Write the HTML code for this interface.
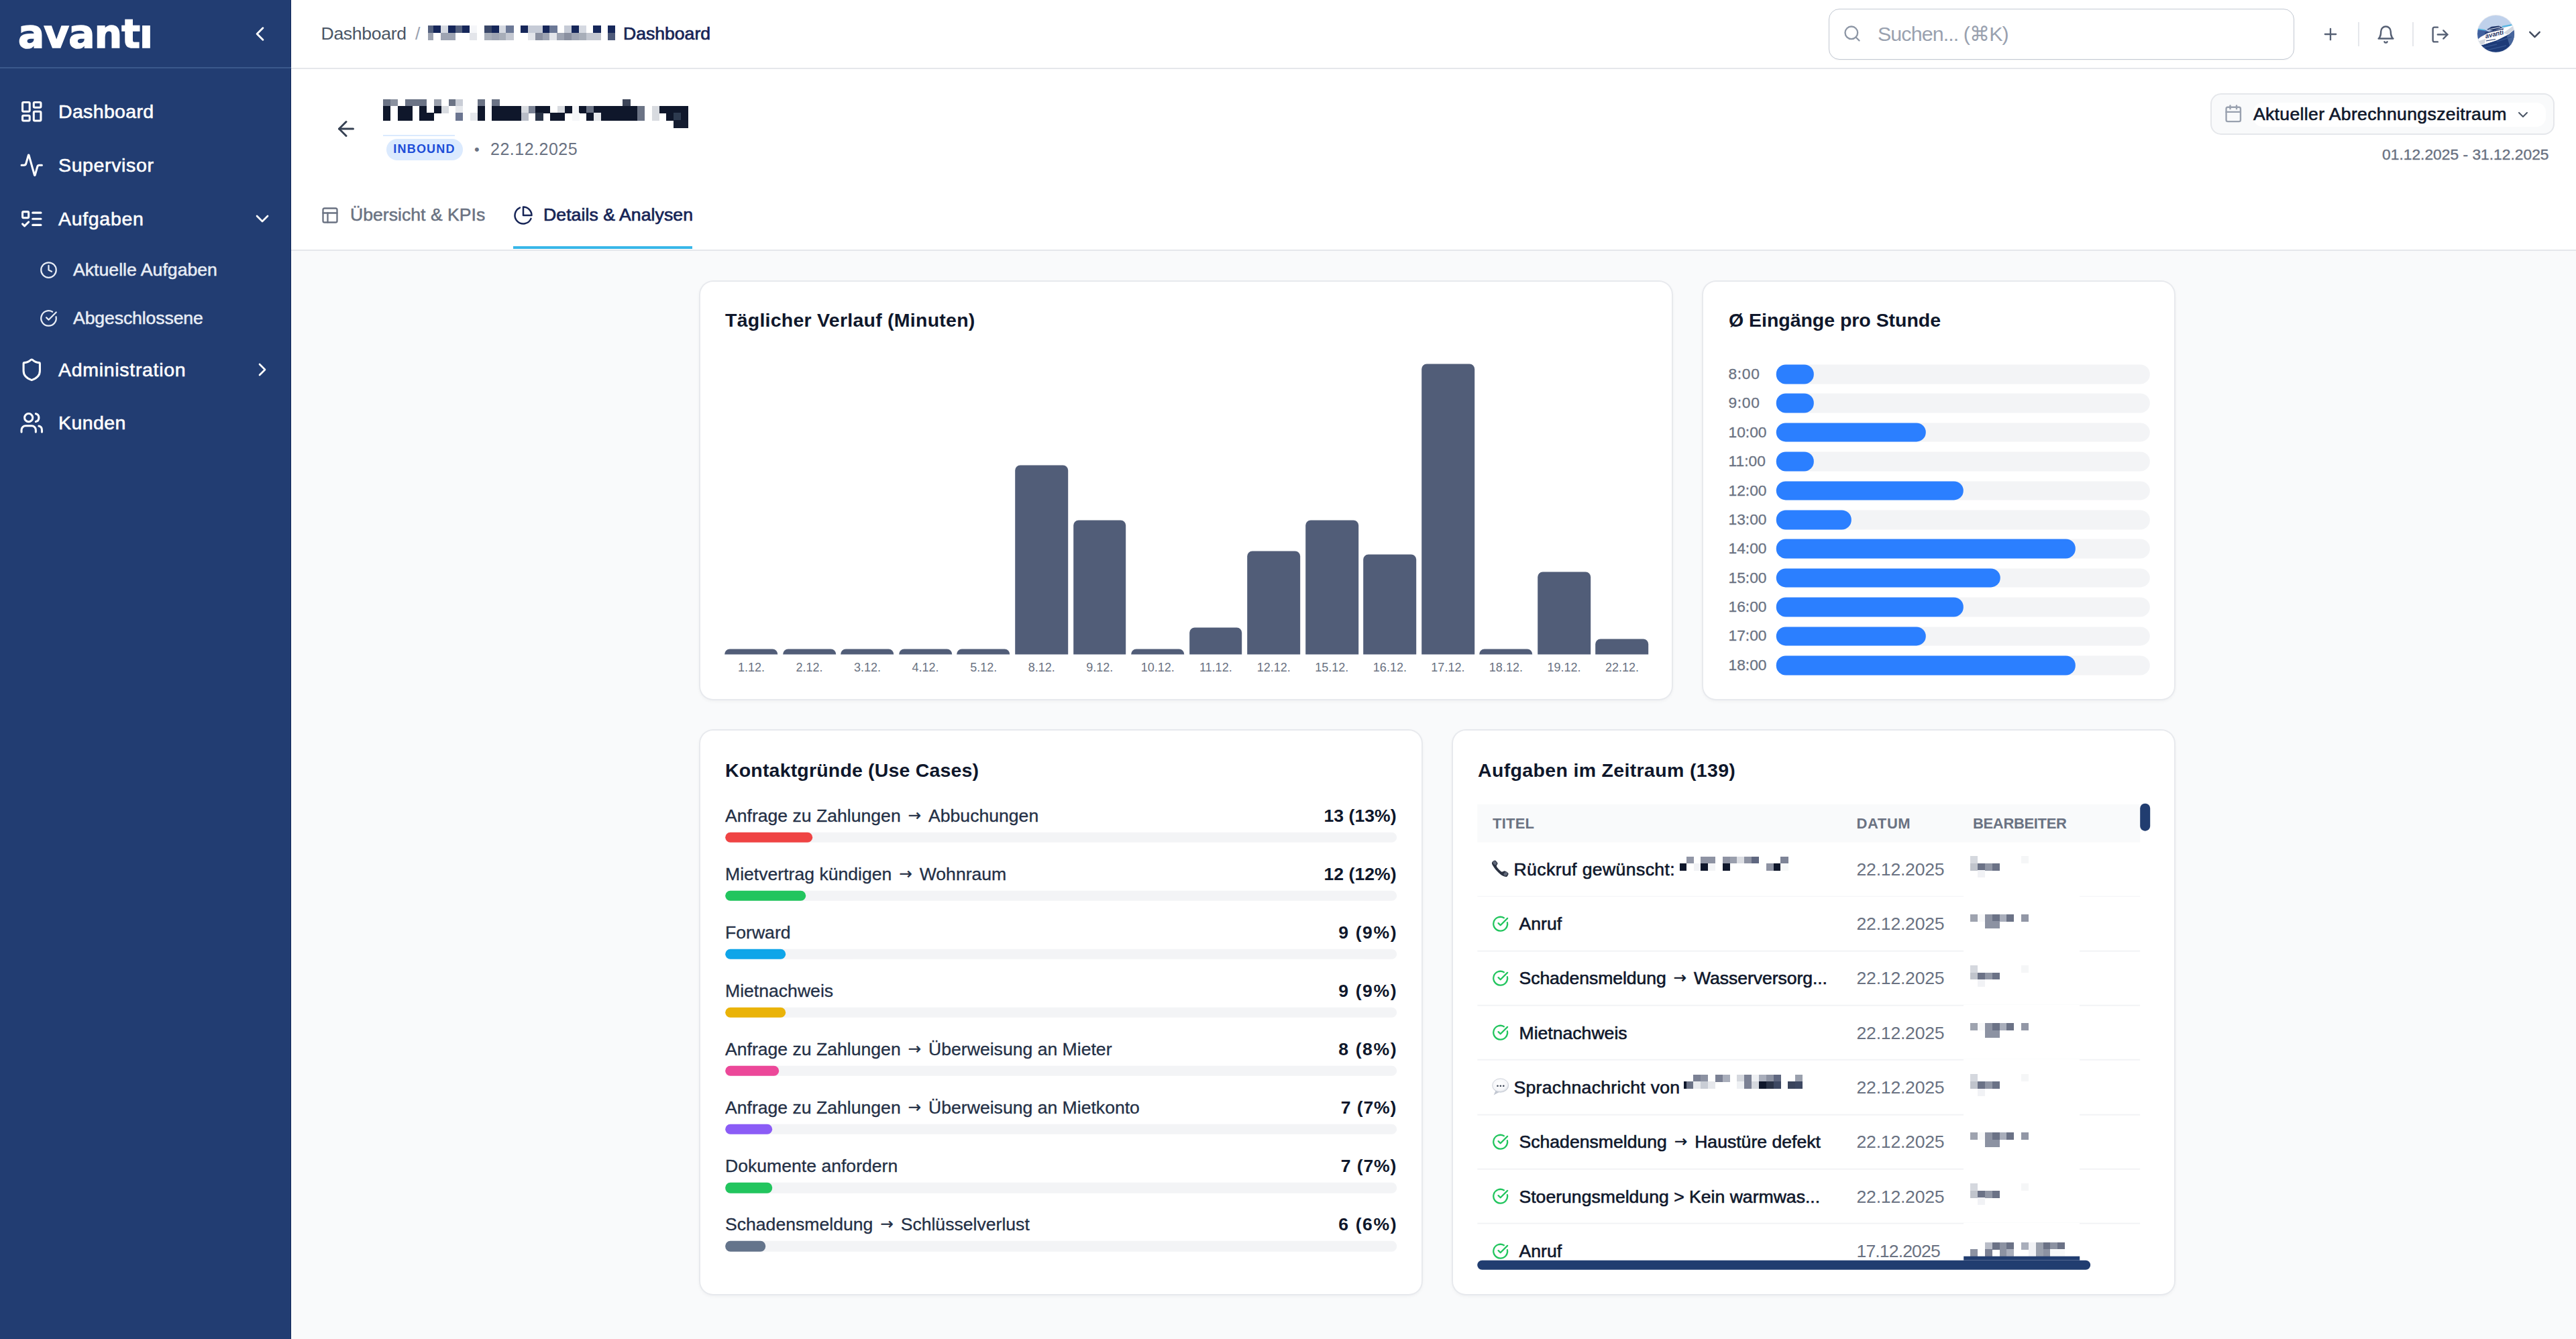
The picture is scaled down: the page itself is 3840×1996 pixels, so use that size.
<!DOCTYPE html>
<html lang="de">
<head>
<meta charset="utf-8">
<title>avanti – Dashboard</title>
<style>
*{box-sizing:border-box;margin:0;padding:0}
html,body{width:3840px;height:1996px;overflow:hidden;background:#f9fafb}
body{font-family:"Liberation Sans",sans-serif;color:#0f172b;position:relative;-webkit-font-smoothing:antialiased}
.abs{position:absolute}
.t{position:absolute;white-space:nowrap;display:flex;align-items:center;line-height:1}
svg.ic{position:absolute;fill:none;stroke:currentColor;stroke-width:2;stroke-linecap:round;stroke-linejoin:round;overflow:visible}

/* ---------- sidebar ---------- */
#sb{position:absolute;left:0;top:0;width:434px;height:1996px;background:#223d72;color:#fff;border-right:1.5px solid #132a5c;z-index:3}
#sb .logo{position:absolute;left:27px;top:12.5px;height:76px;font-family:"DejaVu Sans","Liberation Sans",sans-serif;font-weight:700;font-size:58px;letter-spacing:-.8px;color:#fff;-webkit-text-stroke:1.6px #fff}
#sb .div{position:absolute;left:0;top:100px;width:434px;height:2px;background:#3a588b}
#sb .it{font-size:28.5px;height:40px;left:87px;color:#fff;-webkit-text-stroke:.6px #fff}
#sb .sub{font-size:26.6px;height:40px;left:109px;color:#e8edf5;-webkit-text-stroke:.5px #e8edf5}

/* ---------- top bar ---------- */
#tb{position:absolute;left:434px;top:0;width:3406px;height:103px;background:#fff;border-bottom:2px solid #e5e7eb;z-index:2}
#ph{position:absolute;left:434px;top:102px;width:3406px;height:272px;background:#fff;border-bottom:2px solid #e5e7eb}


/* top bar content */
#tb .bc{font-size:26.6px;height:40px;top:30.3px;color:#4a5565}
#tb .bc.cur{color:#162456;font-weight:400;-webkit-text-stroke:.7px #162456}
#search{position:absolute;left:2292px;top:13px;width:694px;height:75.5px;border:1.6px solid #c3c9d3;border-radius:16px;background:#fff;box-shadow:0 1px 2px rgba(0,0,0,.04)}
#search .ph{left:72px;top:16px;height:40px;font-size:30.4px;color:#99a1af}
.vdiv{position:absolute;width:2px;height:36px;top:32.5px;background:#e5e7eb}
/* page head */
#ph .badge{position:absolute;left:141.5px;top:104.5px;width:114px;height:32px;border-radius:16px;background:#dbeafe;color:#1d4ed8;font-size:18px;font-weight:700;letter-spacing:1.6px;display:flex;align-items:center;justify-content:center}
#ph .date{left:297px;top:100.5px;height:40px;font-size:25px;color:#6a7282}
#ph .dot{left:273px;top:101px;height:40px;font-size:22px;color:#6a7282}
#ph .tab{font-size:26.6px;height:40px;top:198.5px}
#per{position:absolute;left:2861.4px;top:37.4px;width:512.2px;height:61.2px;border:2px solid #e5e7eb;border-radius:16px;background:#f9fafb}
#per .in{position:absolute;left:62px;top:11.5px;width:436px;height:36px;border-radius:14px;background:#fff}
#per .tx{left:61.5px;top:9px;height:40px;font-size:26.6px;color:#0f172b;-webkit-text-stroke:.6px #0f172b}
#ph .range{right:40.5px;top:108px;height:40px;font-size:22.8px;color:#6a7282;-webkit-text-stroke:.4px #6a7282}

/* ---------- cards ---------- */
.card{position:absolute;background:#fff;border-radius:19px;box-shadow:0 0 0 1.9px #e7e9ed,0 2px 6px rgba(15,23,43,.07)}
#c1>*,#c3>*,#c4>*{transform:translate(-.8px,-.3px)}#c2>*{transform:translate(-.2px,-.6px)}#c1>*{transform:translate(-.8px,-.6px)}
.ct{font-size:28.5px;font-weight:700;color:#0f172b;height:40px}

.bar{position:absolute;background:#515d78;border-radius:7.6px 7.6px 0 0}
.bl{position:absolute;font-size:18px;color:#6a7282;height:24px;width:120px;display:flex;align-items:center;justify-content:center;line-height:1;white-space:nowrap}
.hl{font-size:22.8px;color:#6a7282;height:30px;-webkit-text-stroke:.3px #6a7282}
.trk{position:absolute;left:109px;width:557px;height:28.5px;border-radius:14.25px;background:#f3f4f6}
.fil{position:absolute;left:109px;height:28.5px;border-radius:14.25px;background:#2b7fff}
.ul{font-size:26.6px;color:#243046;height:38px;left:38px;-webkit-text-stroke:.3px #243046}
.uv{font-size:26.6px;color:#0f172b;font-weight:700;height:38px;right:36.5px}
.ut{position:absolute;left:38px;width:1001px;height:15.2px;border-radius:7.6px;background:#f3f4f6}
.uf{position:absolute;left:38px;height:15.2px;border-radius:7.6px}
.th{font-size:22px;font-weight:700;color:#6a7282;letter-spacing:.6px;height:30px}
.tt{font-size:26.6px;color:#0f172b;height:38px;-webkit-text-stroke:.6px #0f172b}
.td{font-size:26.6px;color:#6a7282;height:38px;left:602.5px}
.sep{position:absolute;left:37px;width:988.5px;height:1.9px;background:#f2f3f5}
.ar{font-family:"DejaVu Sans","Liberation Sans",sans-serif;font-size:.86em;-webkit-text-stroke:.5px currentColor;position:relative;top:-1px;margin:0 .485em}
</style>
</head>
<body>

<!-- ================= SIDEBAR ================= -->
<div id="sb">
  <div class="t logo">avanti</div>
  <div class="abs" style="left:160px;top:14px;width:40px;height:14.3px;background:#223d72"></div><div class="abs" style="left:198px;top:14px;width:40px;height:22.5px;background:#223d72"></div>
  <svg class="ic" style="left:370px;top:32.5px;width:35px;height:35px" viewBox="0 0 24 24"><path d="m15 18-6-6 6-6"/></svg>
  <div class="div"></div>

  <svg class="ic" style="left:29px;top:148px;width:36.5px;height:36.5px" viewBox="0 0 24 24"><rect width="7" height="9" x="3" y="3" rx="1"/><rect width="7" height="5" x="14" y="3" rx="1"/><rect width="7" height="9" x="14" y="12" rx="1"/><rect width="7" height="5" x="3" y="16" rx="1"/></svg>
  <div class="t it" style="top:146px;letter-spacing:0.34px">Dashboard</div>

  <svg class="ic" style="left:29px;top:228px;width:36.5px;height:36.5px" viewBox="0 0 24 24"><path d="M22 12h-2.48a2 2 0 0 0-1.93 1.46l-2.35 8.36a.25.25 0 0 1-.48 0L9.24 2.18a.25.25 0 0 0-.48 0l-2.35 8.36A2 2 0 0 1 4.49 12H2"/></svg>
  <div class="t it" style="top:226px;letter-spacing:0.63px">Supervisor</div>

  <svg class="ic" style="left:29px;top:308px;width:36.5px;height:36.5px" viewBox="0 0 24 24"><rect x="3" y="5" width="6" height="6" rx="1"/><path d="m3 17 2 2 4-4"/><path d="M13 6h8"/><path d="M13 12h8"/><path d="M13 18h8"/></svg>
  <div class="t it" style="top:306px;letter-spacing:0.68px">Aufgaben</div>
  <svg class="ic" style="left:375px;top:310px;width:32px;height:32px" viewBox="0 0 24 24"><path d="m6 9 6 6 6-6"/></svg>

  <svg class="ic" style="left:59px;top:388.5px;width:27px;height:27px;color:#e8edf5" viewBox="0 0 24 24"><circle cx="12" cy="12" r="10"/><polyline points="12 6 12 12 16 14"/></svg>
  <div class="t sub" style="top:382px;letter-spacing:0.03px">Aktuelle Aufgaben</div>

  <svg class="ic" style="left:59px;top:461px;width:27px;height:27px;color:#e8edf5" viewBox="0 0 24 24"><path d="M21.801 10A10 10 0 1 1 17 3.335"/><path d="m9 11 3 3L22 4"/></svg>
  <div class="t sub" style="top:454.5px;letter-spacing:-0.10px">Abgeschlossene</div>

  <svg class="ic" style="left:29px;top:532.5px;width:36.5px;height:36.5px" viewBox="0 0 24 24"><path d="M20 13c0 5-3.5 7.5-7.66 8.95a1 1 0 0 1-.67-.01C7.5 20.5 4 18 4 13V6a1 1 0 0 1 1-1c2 0 4.5-1.2 6.24-2.72a1.17 1.17 0 0 1 1.52 0C14.51 3.81 17 5 19 5a1 1 0 0 1 1 1z"/></svg>
  <div class="t it" style="top:531px;letter-spacing:0.70px">Administration</div>
  <svg class="ic" style="left:375px;top:535px;width:32px;height:32px" viewBox="0 0 24 24"><path d="m9 18 6-6-6-6"/></svg>

  <svg class="ic" style="left:29px;top:612px;width:36.5px;height:36.5px" viewBox="0 0 24 24"><path d="M16 21v-2a4 4 0 0 0-4-4H6a4 4 0 0 0-4 4v2"/><circle cx="9" cy="7" r="4"/><path d="M22 21v-2a4 4 0 0 0-3-3.87"/><path d="M16 3.13a4 4 0 0 1 0 7.75"/></svg>
  <div class="t it" style="top:610px;letter-spacing:0.40px">Kunden</div>
</div>

<!-- ================= TOP BAR ================= -->
<div id="tb">
  <div class="t bc" style="left:44.5px;letter-spacing:-0.33px">Dashboard</div>
  <div class="t bc" style="left:185px;color:#99a1af">/</div>
  <svg class="abs" style="left:203.9px;top:37.9px" width="282" height="23" viewBox="0 0 282 23" shape-rendering="crispEdges"><rect x="0.0" y="0.0" width="8.4" height="11.0" fill="#54617f"/><rect x="8.1" y="0.0" width="11.1" height="11.0" fill="#16275a"/><rect x="18.9" y="0.0" width="11.1" height="11.0" fill="#d5d9e1"/><rect x="29.8" y="0.0" width="11.1" height="11.0" fill="#16275a"/><rect x="40.6" y="0.0" width="11.1" height="11.0" fill="#54617f"/><rect x="51.4" y="0.0" width="11.1" height="11.0" fill="#16275a"/><rect x="62.2" y="0.0" width="11.1" height="11.0" fill="#f5f6f9"/><rect x="83.9" y="0.0" width="11.1" height="11.0" fill="#3a4768"/><rect x="94.7" y="0.0" width="11.1" height="11.0" fill="#16275a"/><rect x="105.6" y="0.0" width="11.1" height="11.0" fill="#d5d9e1"/><rect x="116.4" y="0.0" width="11.1" height="11.0" fill="#6b7896"/><rect x="138.1" y="0.0" width="11.1" height="11.0" fill="#16275a"/><rect x="148.9" y="0.0" width="11.1" height="11.0" fill="#c6cbd6"/><rect x="159.7" y="0.0" width="11.1" height="11.0" fill="#c6cbd6"/><rect x="170.5" y="0.0" width="11.1" height="11.0" fill="#16275a"/><rect x="181.4" y="0.0" width="11.1" height="11.0" fill="#6b7896"/><rect x="203.0" y="0.0" width="11.1" height="11.0" fill="#c6cbd6"/><rect x="213.9" y="0.0" width="11.1" height="11.0" fill="#16275a"/><rect x="224.7" y="0.0" width="11.1" height="11.0" fill="#d5d9e1"/><rect x="246.4" y="0.0" width="11.1" height="11.0" fill="#16275a"/><rect x="268.0" y="0.0" width="11.1" height="11.0" fill="#16275a"/><rect x="0.0" y="10.7" width="8.4" height="11.2" fill="#9ea4b2"/><rect x="18.9" y="10.7" width="11.1" height="11.2" fill="#9ea4b2"/><rect x="29.8" y="10.7" width="11.1" height="11.2" fill="#9ea4b2"/><rect x="62.2" y="10.7" width="11.1" height="11.2" fill="#e3e5ea"/><rect x="83.9" y="10.7" width="11.1" height="11.2" fill="#a8aeb9"/><rect x="94.7" y="10.7" width="11.1" height="11.2" fill="#9ea4b2"/><rect x="105.6" y="10.7" width="11.1" height="11.2" fill="#a8aeb9"/><rect x="116.4" y="10.7" width="11.1" height="11.2" fill="#c4c8d1"/><rect x="148.9" y="10.7" width="11.1" height="11.2" fill="#e3e5ea"/><rect x="159.7" y="10.7" width="11.1" height="11.2" fill="#8a90a0"/><rect x="170.5" y="10.7" width="11.1" height="11.2" fill="#9ea4b2"/><rect x="181.4" y="10.7" width="11.1" height="11.2" fill="#e3e5ea"/><rect x="192.2" y="10.7" width="11.1" height="11.2" fill="#9ea4b2"/><rect x="203.0" y="10.7" width="11.1" height="11.2" fill="#8a90a0"/><rect x="213.9" y="10.7" width="11.1" height="11.2" fill="#9ea4b2"/><rect x="224.7" y="10.7" width="11.1" height="11.2" fill="#a8aeb9"/><rect x="235.5" y="10.7" width="11.1" height="11.2" fill="#c4c8d1"/><rect x="246.4" y="10.7" width="11.1" height="11.2" fill="#c4c8d1"/><rect x="268.0" y="10.7" width="11.1" height="11.2" fill="#4d5a7a"/></svg>
  <div class="t bc cur" style="left:495px;letter-spacing:-0.01px">Dashboard</div>

  <div id="search">
    <svg class="ic" style="left:19.5px;top:22px;width:28px;height:28px;color:#8d96a5" viewBox="0 0 24 24"><circle cx="11" cy="11" r="8"/><path d="m21 21-4.3-4.3"/></svg>
    <div class="t ph" style="letter-spacing:-.9px">Suchen... (⌘K)</div>
  </div>
  <svg class="ic" style="left:3026.3px;top:37px;width:28px;height:28px;color:#566074" viewBox="0 0 24 24"><path d="M5 12h14"/><path d="M12 5v14"/></svg>
  <div class="vdiv" style="left:3080.5px"></div>
  <svg class="ic" style="left:3107.5px;top:36.5px;width:29px;height:29px;color:#566074" viewBox="0 0 24 24"><path d="M6 8a6 6 0 0 1 12 0c0 7 3 9 3 9H3s3-2 3-9"/><path d="M10.3 21a1.94 1.94 0 0 0 3.4 0"/></svg>
  <div class="vdiv" style="left:3161.5px"></div>
  <svg class="ic" style="left:3188.5px;top:36.500px;width:29px;height:29px;color:#566074" viewBox="0 0 24 24"><path d="M9 21H5a2 2 0 0 1-2-2V5a2 2 0 0 1 2-2h4"/><polyline points="16 17 21 12 16 7"/><line x1="21" x2="9" y1="12" y2="12"/></svg>
  <svg class="abs" style="left:3257.5px;top:21.7px" width="57" height="57" viewBox="0 0 57 57">
    <defs><clipPath id="avc"><circle cx="28.500" cy="28.400" r="27.400"/></clipPath></defs>
    <circle cx="28.500" cy="28.400" r="28.300" fill="#e6e9ef"/>
    <g clip-path="url(#avc)">
      <rect width="57" height="57" fill="#bfd1eb"/>
      <path d="M0 21.500L13 23L22 27L8 35L0 37Z" fill="#40609e"/>
      <path d="M0 20L13 22.200L13 23.800L0 22Z M38 16.800L57 13L57 15.500L38 19Z" fill="#56b6e2"/>
      <path d="M0 46L10 44.500L30 38L48 29L57 21.500L57 57L0 57Z" fill="#1d3b78"/>
      <path d="M45 32L57 21.500L57 45L50 49Z" fill="#46659c"/>
      <path d="M4 50L30 44M14 53L44 46M30 40L52 33" stroke="#34548f" stroke-width="1.4" fill="none"/>
      <path d="M0 38L6 33L20 25.500L40 19.500L55 15.500L57 21.500L48 29L30 38L10 44.500L0 46Z" fill="#fff"/>
      <path d="M0 40L13 36L12 43L1 46Z M40 27L55 16L57 21L46 29.500Z" fill="#d3d8e0"/>
      <path d="M15 22L22 17.800L33 16.500L38.500 19L25 24Z" fill="#22386c"/>
      <path d="M18 22L35 18.500" stroke="#dfe5f0" stroke-width="1" fill="none"/>
      <path d="M12 27.500L40 20.800" stroke="#22386c" stroke-width="1.300" fill="none"/>
      <path d="M14 39L28 36.500" stroke="#22386c" stroke-width="1.100" fill="none"/>
      <text x="13.500" y="35.200" transform="rotate(-13 13.500 35.200)" font-family="Liberation Sans,sans-serif" font-style="italic" font-weight="700" font-size="9.600" fill="#182c60">avanti</text>
    </g>
  </svg>
  <svg class="ic" style="left:3330px;top:36.5px;width:29px;height:29px;color:#414b5e" viewBox="0 0 24 24"><path d="m6 9 6 6 6-6"/></svg>
</div>

<!-- ================= PAGE HEAD ================= -->
<div id="ph">
  <svg class="ic" style="left:63.5px;top:72px;width:36px;height:36px;color:#364153" viewBox="0 0 24 24"><path d="m12 19-7-7 7-7"/><path d="M19 12H5"/></svg>
  <svg class="abs" style="left:136.8px;top:45.55px" width="456" height="43" viewBox="0 0 456 43" shape-rendering="crispEdges"><rect x="0.0" y="0.0" width="11.1" height="10.2" fill="#6b7385"/><rect x="10.8" y="0.0" width="11.1" height="10.2" fill="#8a919f"/><rect x="32.5" y="0.0" width="11.1" height="10.2" fill="#6b7385"/><rect x="43.3" y="0.0" width="11.1" height="10.2" fill="#6b7385"/><rect x="54.1" y="0.0" width="11.1" height="10.2" fill="#6b7385"/><rect x="75.8" y="0.0" width="11.1" height="10.2" fill="#9aa0ac"/><rect x="97.5" y="0.0" width="11.1" height="10.2" fill="#6b7385"/><rect x="108.3" y="0.0" width="11.1" height="10.2" fill="#c9cdd6"/><rect x="140.8" y="0.0" width="11.1" height="10.2" fill="#6b7385"/><rect x="162.4" y="0.0" width="11.1" height="10.2" fill="#6b7385"/><rect x="357.4" y="0.0" width="11.1" height="10.2" fill="#3d4558"/><rect x="0.0" y="9.8" width="11.1" height="10.9" fill="#0f172b"/><rect x="21.7" y="9.8" width="11.1" height="10.9" fill="#0f172b"/><rect x="32.5" y="9.8" width="11.1" height="10.9" fill="#0f172b"/><rect x="54.1" y="9.8" width="11.1" height="10.9" fill="#0f172b"/><rect x="75.8" y="9.8" width="11.1" height="10.9" fill="#0f172b"/><rect x="86.6" y="9.8" width="11.1" height="10.9" fill="#d8dbe0"/><rect x="108.3" y="9.8" width="11.1" height="10.9" fill="#e6e8ec"/><rect x="140.8" y="9.8" width="11.1" height="10.9" fill="#0f172b"/><rect x="162.4" y="9.8" width="11.1" height="10.9" fill="#0f172b"/><rect x="173.3" y="9.8" width="11.1" height="10.9" fill="#0f172b"/><rect x="184.1" y="9.8" width="11.1" height="10.9" fill="#0f172b"/><rect x="194.9" y="9.8" width="11.1" height="10.9" fill="#0f172b"/><rect x="205.8" y="9.8" width="11.1" height="10.9" fill="#d8dbe0"/><rect x="216.6" y="9.8" width="11.1" height="10.9" fill="#7a8294"/><rect x="227.4" y="9.8" width="11.1" height="10.9" fill="#0f172b"/><rect x="238.3" y="9.8" width="11.1" height="10.9" fill="#0f172b"/><rect x="259.9" y="9.8" width="11.1" height="10.9" fill="#d8dbe0"/><rect x="270.8" y="9.8" width="11.1" height="10.9" fill="#0f172b"/><rect x="281.6" y="9.8" width="11.1" height="10.9" fill="#f5f6f8"/><rect x="292.4" y="9.8" width="11.1" height="10.9" fill="#0f172b"/><rect x="303.2" y="9.8" width="11.1" height="10.9" fill="#6b7385"/><rect x="314.1" y="9.8" width="11.1" height="10.9" fill="#0f172b"/><rect x="324.9" y="9.8" width="11.1" height="10.9" fill="#0f172b"/><rect x="335.7" y="9.8" width="11.1" height="10.9" fill="#0f172b"/><rect x="346.6" y="9.8" width="11.1" height="10.9" fill="#0f172b"/><rect x="357.4" y="9.8" width="11.1" height="10.9" fill="#0f172b"/><rect x="368.2" y="9.8" width="11.1" height="10.9" fill="#0f172b"/><rect x="379.1" y="9.8" width="11.1" height="10.9" fill="#6b7385"/><rect x="400.7" y="9.8" width="11.1" height="10.9" fill="#d8dbe0"/><rect x="411.5" y="9.8" width="11.1" height="10.9" fill="#0f172b"/><rect x="422.4" y="9.8" width="11.1" height="10.9" fill="#0f172b"/><rect x="433.2" y="9.8" width="11.1" height="10.9" fill="#0f172b"/><rect x="444.0" y="9.8" width="11.1" height="10.9" fill="#0f172b"/><rect x="0.0" y="20.4" width="11.1" height="11.2" fill="#0f172b"/><rect x="21.7" y="20.4" width="11.1" height="11.2" fill="#0f172b"/><rect x="32.5" y="20.4" width="11.1" height="11.2" fill="#0f172b"/><rect x="54.1" y="20.4" width="11.1" height="11.2" fill="#0f172b"/><rect x="65.0" y="20.4" width="11.1" height="11.2" fill="#0f172b"/><rect x="108.3" y="20.4" width="11.1" height="11.2" fill="#6b7590"/><rect x="130.0" y="20.4" width="11.1" height="11.2" fill="#e6e8ec"/><rect x="140.8" y="20.4" width="11.1" height="11.2" fill="#0f172b"/><rect x="162.4" y="20.4" width="11.1" height="11.2" fill="#0f172b"/><rect x="173.3" y="20.4" width="11.1" height="11.2" fill="#0f172b"/><rect x="184.1" y="20.4" width="11.1" height="11.2" fill="#0f172b"/><rect x="194.9" y="20.4" width="11.1" height="11.2" fill="#0f172b"/><rect x="205.8" y="20.4" width="11.1" height="11.2" fill="#b9bec8"/><rect x="227.4" y="20.4" width="11.1" height="11.2" fill="#2a3447"/><rect x="249.1" y="20.4" width="11.1" height="11.2" fill="#0f172b"/><rect x="259.9" y="20.4" width="11.1" height="11.2" fill="#0f172b"/><rect x="281.6" y="20.4" width="11.1" height="11.2" fill="#f5f6f8"/><rect x="303.2" y="20.4" width="11.1" height="11.2" fill="#0f172b"/><rect x="314.1" y="20.4" width="11.1" height="11.2" fill="#e6e8ec"/><rect x="324.9" y="20.4" width="11.1" height="11.2" fill="#0f172b"/><rect x="335.7" y="20.4" width="11.1" height="11.2" fill="#0f172b"/><rect x="346.6" y="20.4" width="11.1" height="11.2" fill="#0f172b"/><rect x="357.4" y="20.4" width="11.1" height="11.2" fill="#0f172b"/><rect x="368.2" y="20.4" width="11.1" height="11.2" fill="#0f172b"/><rect x="379.1" y="20.4" width="11.1" height="11.2" fill="#6b7385"/><rect x="400.7" y="20.4" width="11.1" height="11.2" fill="#d8dbe0"/><rect x="422.4" y="20.4" width="11.1" height="11.2" fill="#0f172b"/><rect x="433.2" y="20.4" width="11.1" height="11.2" fill="#2d3a4f"/><rect x="444.0" y="20.4" width="11.1" height="11.2" fill="#0f172b"/><rect x="433.2" y="31.4" width="11.1" height="11.2" fill="#141c30"/><rect x="444.0" y="31.4" width="11.1" height="11.2" fill="#141c30"/></svg>
  <div class="abs" style="left:136.8px;top:98.6px;width:107.7px;height:2px;background:#dbeafe"></div>
  <div class="badge" style="letter-spacing:1.18px">INBOUND</div>
  <div class="t dot">•</div>
  <div class="t date" style="letter-spacing:.5px">22.12.2025</div>

  <div id="per">
    <svg class="ic" style="left:18px;top:14px;width:28.5px;height:28.5px;color:#99a1af" viewBox="0 0 24 24"><path d="M8 2v4"/><path d="M16 2v4"/><rect width="18" height="18" x="3" y="4" rx="2"/><path d="M3 10h18"/></svg>
    <div class="in"></div>
    <div class="t tx" style="letter-spacing:.34px">Aktueller Abrechnungszeitraum</div>
    <svg class="ic" style="left:452px;top:18px;width:24px;height:24px;color:#4a5565" viewBox="0 0 24 24"><path d="m6 9 6 6 6-6"/></svg>
  </div>
  <div class="t range">01.12.2025 - 31.12.2025</div>

  <svg class="ic" style="left:44px;top:204.5px;width:28px;height:28px;color:#6a7282" viewBox="0 0 24 24"><rect width="18" height="18" x="3" y="3" rx="2"/><path d="M3 9h18"/><path d="M9 21V9"/></svg>
  <div class="t tab" style="left:88px;color:#6a7282;-webkit-text-stroke:.5px #6a7282;letter-spacing:0.02px">Übersicht &amp; KPIs</div>
  <svg class="ic" style="left:331px;top:203.5px;width:30px;height:30px;color:#162456" viewBox="0 0 24 24"><path d="M21.21 15.89A10 10 0 1 1 8 2.83"/><path d="M22 12A10 10 0 0 0 12 2v10z"/></svg>
  <div class="t tab" style="left:376px;color:#162456;-webkit-text-stroke:.7px #162456;letter-spacing:0.07px">Details &amp; Analysen</div>
  <div class="abs" style="left:331px;top:265px;width:266.5px;height:4px;background:#38b6e8"></div>
</div>

<!-- ================= CARDS ================= -->
<div class="card" id="c1" style="left:1043.8px;top:419.6px;width:1448.6px;height:622.8px">
  <div class="t ct" style="left:38px;top:39px;letter-spacing:0.25px">Täglicher Verlauf (Minuten)</div>
  <div class="bar" style="left:37.6px;top:548.7px;width:78.9px;height:8px"></div>
  <div class="bl" style="left:17.0px;top:564.8px">1.12.</div>
  <div class="bar" style="left:124.1px;top:548.7px;width:78.9px;height:8px"></div>
  <div class="bl" style="left:103.6px;top:564.8px">2.12.</div>
  <div class="bar" style="left:210.7px;top:548.7px;width:78.9px;height:8px"></div>
  <div class="bl" style="left:190.1px;top:564.8px">3.12.</div>
  <div class="bar" style="left:297.2px;top:548.7px;width:78.9px;height:8px"></div>
  <div class="bl" style="left:276.6px;top:564.8px">4.12.</div>
  <div class="bar" style="left:383.7px;top:548.7px;width:78.9px;height:8px"></div>
  <div class="bl" style="left:363.2px;top:564.8px">5.12.</div>
  <div class="bar" style="left:470.2px;top:274.0px;width:78.9px;height:282.7px"></div>
  <div class="bl" style="left:449.7px;top:564.8px">8.12.</div>
  <div class="bar" style="left:556.8px;top:356.2px;width:78.9px;height:200.5px"></div>
  <div class="bl" style="left:536.2px;top:564.8px">9.12.</div>
  <div class="bar" style="left:643.3px;top:548.7px;width:78.9px;height:8px"></div>
  <div class="bl" style="left:622.8px;top:564.8px">10.12.</div>
  <div class="bar" style="left:729.8px;top:516.5px;width:78.9px;height:40.2px"></div>
  <div class="bl" style="left:709.3px;top:564.8px">11.12.</div>
  <div class="bar" style="left:816.4px;top:402.7px;width:78.9px;height:154px"></div>
  <div class="bl" style="left:795.8px;top:564.8px">12.12.</div>
  <div class="bar" style="left:902.9px;top:356.2px;width:78.9px;height:200.5px"></div>
  <div class="bl" style="left:882.3px;top:564.8px">15.12.</div>
  <div class="bar" style="left:989.4px;top:407.9px;width:78.9px;height:148.8px"></div>
  <div class="bl" style="left:968.9px;top:564.8px">16.12.</div>
  <div class="bar" style="left:1076.0px;top:123.5px;width:78.9px;height:433.2px"></div>
  <div class="bl" style="left:1055.4px;top:564.8px">17.12.</div>
  <div class="bar" style="left:1162.5px;top:548.7px;width:78.9px;height:8px"></div>
  <div class="bl" style="left:1141.9px;top:564.8px">18.12.</div>
  <div class="bar" style="left:1249.0px;top:433.2px;width:78.9px;height:123.5px"></div>
  <div class="bl" style="left:1228.5px;top:564.8px">19.12.</div>
  <div class="bar" style="left:1335.5px;top:533.7px;width:78.9px;height:23px"></div>
  <div class="bl" style="left:1315.0px;top:564.8px">22.12.</div>
</div>
<div class="card" id="c2" style="left:2539.2px;top:419.6px;width:701.6px;height:622.8px">
  <div class="t ct" style="left:38px;top:39px;letter-spacing:-0.03px">Ø Eingänge pro Stunde</div>
  <div class="t hl" style="left:37.5px;top:123.8px;letter-spacing:.65px">8:00</div>
  <div class="trk" style="top:124.5px"></div><div class="fil" style="top:124.5px;width:55.7px"></div>
  <div class="t hl" style="left:37.5px;top:167.2px;letter-spacing:.65px">9:00</div>
  <div class="trk" style="top:167.9px"></div><div class="fil" style="top:167.9px;width:55.7px"></div>
  <div class="t hl" style="left:37.5px;top:210.6px">10:00</div>
  <div class="trk" style="top:211.3px"></div><div class="fil" style="top:211.3px;width:222.8px"></div>
  <div class="t hl" style="left:37.5px;top:253.9px">11:00</div>
  <div class="trk" style="top:254.7px"></div><div class="fil" style="top:254.7px;width:55.7px"></div>
  <div class="t hl" style="left:37.5px;top:297.4px">12:00</div>
  <div class="trk" style="top:298.1px"></div><div class="fil" style="top:298.1px;width:278.5px"></div>
  <div class="t hl" style="left:37.5px;top:340.8px">13:00</div>
  <div class="trk" style="top:341.5px"></div><div class="fil" style="top:341.5px;width:111.4px"></div>
  <div class="t hl" style="left:37.5px;top:384.1px">14:00</div>
  <div class="trk" style="top:384.9px"></div><div class="fil" style="top:384.9px;width:445.6px"></div>
  <div class="t hl" style="left:37.5px;top:427.6px">15:00</div>
  <div class="trk" style="top:428.3px"></div><div class="fil" style="top:428.3px;width:334.2px"></div>
  <div class="t hl" style="left:37.5px;top:470.9px">16:00</div>
  <div class="trk" style="top:471.7px"></div><div class="fil" style="top:471.7px;width:278.5px"></div>
  <div class="t hl" style="left:37.5px;top:514.3px">17:00</div>
  <div class="trk" style="top:515.1px"></div><div class="fil" style="top:515.1px;width:222.8px"></div>
  <div class="t hl" style="left:37.5px;top:557.8px">18:00</div>
  <div class="trk" style="top:558.5px"></div><div class="fil" style="top:558.5px;width:445.6px"></div>
</div>
<div class="card" id="c3" style="left:1043.8px;top:1089.1px;width:1075px;height:839.6px">
  <div class="t ct" style="left:38px;top:39.5px;letter-spacing:0.18px">Kontaktgründe (Use Cases)</div>
  <div class="t ul" style="top:108.2px">Anfrage zu Zahlungen <span class="ar">→</span> Abbuchungen</div><div class="t uv" style="top:108.2px">13 (13%)</div>
  <div class="ut" style="top:151.9px"></div><div class="uf" style="top:151.9px;width:130.1px;background:#ef4444"></div>
  <div class="t ul" style="top:195.3px">Mietvertrag kündigen <span class="ar">→</span> Wohnraum</div><div class="t uv" style="top:195.3px">12 (12%)</div>
  <div class="ut" style="top:239.0px"></div><div class="uf" style="top:239.0px;width:120.1px;background:#22c55e"></div>
  <div class="t ul" style="top:282.3px">Forward</div><div class="t uv" style="top:282.3px;letter-spacing:1.57px;margin-right:-1.57px">9 (9%)</div>
  <div class="ut" style="top:326.0px"></div><div class="uf" style="top:326.0px;width:90.1px;background:#0ea5e9"></div>
  <div class="t ul" style="top:369.4px">Mietnachweis</div><div class="t uv" style="top:369.4px;letter-spacing:1.57px;margin-right:-1.57px">9 (9%)</div>
  <div class="ut" style="top:413.1px"></div><div class="uf" style="top:413.1px;width:90.1px;background:#eab308"></div>
  <div class="t ul" style="top:456.5px">Anfrage zu Zahlungen <span class="ar">→</span> Überweisung an Mieter</div><div class="t uv" style="top:456.5px;letter-spacing:1.57px;margin-right:-1.57px">8 (8%)</div>
  <div class="ut" style="top:500.2px"></div><div class="uf" style="top:500.2px;width:80.1px;background:#ec4899"></div>
  <div class="t ul" style="top:543.5px">Anfrage zu Zahlungen <span class="ar">→</span> Überweisung an Mietkonto</div><div class="t uv" style="top:543.5px;letter-spacing:0.90px;margin-right:-0.90px">7 (7%)</div>
  <div class="ut" style="top:587.2px"></div><div class="uf" style="top:587.2px;width:70.1px;background:#8b5cf6"></div>
  <div class="t ul" style="top:630.6px">Dokumente anfordern</div><div class="t uv" style="top:630.6px;letter-spacing:0.90px;margin-right:-0.90px">7 (7%)</div>
  <div class="ut" style="top:674.3px"></div><div class="uf" style="top:674.3px;width:70.1px;background:#22c55e"></div>
  <div class="t ul" style="top:717.7px">Schadensmeldung <span class="ar">→</span> Schlüsselverlust</div><div class="t uv" style="top:717.7px;letter-spacing:1.57px;margin-right:-1.57px">6 (6%)</div>
  <div class="ut" style="top:761.4px"></div><div class="uf" style="top:761.4px;width:60.1px;background:#64748b"></div>
</div>
<div class="card" id="c4" style="left:2165.8px;top:1089.1px;width:1075px;height:839.6px">
  <div class="t ct" style="left:38px;top:39.5px;letter-spacing:0.34px">Aufgaben im Zeitraum (139)</div>
  <div class="abs" id="tbl" style="left:37px;top:109.5px;width:1003px;height:680px;overflow:hidden">
   <div class="abs" style="left:0;top:0;width:988.5px;height:57px;background:#f9fafb"></div>
   <div class="t th" style="left:23px;top:14.2px;letter-spacing:0.24px">TITEL</div><div class="t th" style="left:565.5px;top:14.2px;letter-spacing:0.6px">DATUM</div><div class="t th" style="left:739px;top:14.2px;letter-spacing:-0.35px">BEARBEITER</div>
   <div class="sep" style="left:0;top:137.0px"></div>
   <svg class="abs" style="left:21.5px;top:83px" width="26" height="26" viewBox="0 0 26 26"><path d="M5.2 .8C6.200 .6 9.600 4.200 9.300 5.800C9.100 7 7.800 7.800 7.600 9C7.900 10.600 9.300 12.300 10.700 13.700C12.200 15.300 13.900 17 15.400 17.900C16.900 18.300 18.300 16.400 20.100 16.700C21.900 17 25.500 19.200 25.400 20.700C25.300 22.300 23.600 25.100 22.400 25.300C20.800 25.500 18.500 24.900 16.800 23.900C14.300 22.500 11.800 20.500 9.800 18.300C7.600 16 5.600 14 4.200 11.800C2.800 9.700 .9 7 .7 5.300C.6 3.900 1.400 2.800 2.400 2C3.200 1.400 4.300 .9 5.200 .8Z" fill="#2b3242"/><ellipse cx="5.100" cy="4.700" rx="2.300" ry="3.100" transform="rotate(-42 5.100 4.700)" fill="#5f6778"/><ellipse cx="21.200" cy="21" rx="3.100" ry="2.300" transform="rotate(-42 21.200 21)" fill="#5f6778"/></svg>
   <div class="t tt" style="left:54.5px;top:78.5px;letter-spacing:0.39px">Rückruf gewünscht:</div>
   <div class="t td" style="left:565.5px;top:78.5px;letter-spacing:-0.22px">22.12.2025</div>
   <div class="sep" style="left:0;top:218.3px"></div>
   <svg class="ic" style="left:22.5px;top:166.3px;width:25px;height:25px;color:#22c55e;stroke-width:2.2" viewBox="0 0 24 24"><path d="M21.801 10A10 10 0 1 1 17 3.335"/><path d="m9 11 3 3L22 4"/></svg>
   <div class="t tt" style="left:62.5px;top:159.8px">Anruf</div>
   <div class="t td" style="left:565.5px;top:159.8px;letter-spacing:-0.22px">22.12.2025</div>
   <div class="sep" style="left:0;top:299.6px"></div>
   <svg class="ic" style="left:22.5px;top:247.6px;width:25px;height:25px;color:#22c55e;stroke-width:2.2" viewBox="0 0 24 24"><path d="M21.801 10A10 10 0 1 1 17 3.335"/><path d="m9 11 3 3L22 4"/></svg>
   <div class="t tt" style="left:62.5px;top:241.1px;letter-spacing:-0.07px">Schadensmeldung <span class="ar">→</span> Wasserversorg...</div>
   <div class="t td" style="left:565.5px;top:241.1px;letter-spacing:-0.22px">22.12.2025</div>
   <div class="sep" style="left:0;top:380.9px"></div>
   <svg class="ic" style="left:22.5px;top:328.9px;width:25px;height:25px;color:#22c55e;stroke-width:2.2" viewBox="0 0 24 24"><path d="M21.801 10A10 10 0 1 1 17 3.335"/><path d="m9 11 3 3L22 4"/></svg>
   <div class="t tt" style="left:62.5px;top:322.4px">Mietnachweis</div>
   <div class="t td" style="left:565.5px;top:322.4px;letter-spacing:-0.22px">22.12.2025</div>
   <div class="sep" style="left:0;top:462.2px"></div>
   <svg class="abs" style="left:21px;top:407.5px" width="28" height="28" viewBox="0 0 28 28"><defs><radialGradient id="bub" cx=".45" cy=".4" r=".62"><stop offset="0" stop-color="#fff"/><stop offset=".75" stop-color="#f4f5f8"/><stop offset="1" stop-color="#c9ced8"/></radialGradient></defs><path d="M6.500 19.500L3.400 26.800L12.500 21.800Z" fill="#c3c8d2"/><ellipse cx="13.500" cy="12.300" rx="12" ry="10.200" fill="url(#bub)" stroke="#c2c7d1" stroke-width=".8"/><circle cx="9.300" cy="13" r="1.300" fill="#3a4354"/><circle cx="13.700" cy="13" r="1.300" fill="#3a4354"/><circle cx="18.100" cy="13" r="1.300" fill="#3a4354"/></svg>
   <div class="t tt" style="left:54.5px;top:403.7px;letter-spacing:0.29px">Sprachnachricht von</div>
   <div class="t td" style="left:565.5px;top:403.7px;letter-spacing:-0.22px">22.12.2025</div>
   <div class="sep" style="left:0;top:543.5px"></div>
   <svg class="ic" style="left:22.5px;top:491.5px;width:25px;height:25px;color:#22c55e;stroke-width:2.2" viewBox="0 0 24 24"><path d="M21.801 10A10 10 0 1 1 17 3.335"/><path d="m9 11 3 3L22 4"/></svg>
   <div class="t tt" style="left:62.5px;top:485.0px">Schadensmeldung <span class="ar">→</span> Haustüre defekt</div>
   <div class="t td" style="left:565.5px;top:485.0px;letter-spacing:-0.22px">22.12.2025</div>
   <div class="sep" style="left:0;top:624.8px"></div>
   <svg class="ic" style="left:22.5px;top:572.8px;width:25px;height:25px;color:#22c55e;stroke-width:2.2" viewBox="0 0 24 24"><path d="M21.801 10A10 10 0 1 1 17 3.335"/><path d="m9 11 3 3L22 4"/></svg>
   <div class="t tt" style="left:62.5px;top:566.3px">Stoerungsmeldung &gt; Kein warmwas...</div>
   <div class="t td" style="left:565.5px;top:566.3px;letter-spacing:-0.22px">22.12.2025</div>
   <svg class="ic" style="left:22.5px;top:654.1px;width:25px;height:25px;color:#22c55e;stroke-width:2.2" viewBox="0 0 24 24"><path d="M21.801 10A10 10 0 1 1 17 3.335"/><path d="m9 11 3 3L22 4"/></svg>
   <div class="t tt" style="left:62.5px;top:647.6px">Anruf</div>
   <div class="t td" style="left:565.5px;top:647.6px;letter-spacing:-0.88px">17.12.2025</div>
   <svg class="abs" style="left:0;top:0" width="1003" height="680" viewBox="0 0 1003 680" shape-rendering="crispEdges"><rect x="725.2" y="136.3" width="172.7" height="3.2" fill="#fff"/><rect x="725.2" y="217.6" width="172.7" height="3.2" fill="#fff"/><rect x="725.2" y="298.9" width="172.7" height="3.2" fill="#fff"/><rect x="725.2" y="380.2" width="172.7" height="3.2" fill="#fff"/><rect x="725.2" y="461.5" width="172.7" height="3.2" fill="#fff"/><rect x="725.2" y="542.8" width="172.7" height="3.2" fill="#fff"/><rect x="725.2" y="624.1" width="172.7" height="3.2" fill="#fff"/><rect x="311.5" y="78.4" width="11.1" height="10.2" fill="#9196a6"/><rect x="333.2" y="78.4" width="11.1" height="10.2" fill="#8e93a3"/><rect x="344.0" y="78.4" width="11.1" height="10.2" fill="#8e93a3"/><rect x="365.7" y="78.4" width="11.1" height="10.2" fill="#8e93a3"/><rect x="376.5" y="78.4" width="11.1" height="10.2" fill="#9a9fad"/><rect x="387.3" y="78.4" width="11.1" height="10.2" fill="#dcdee3"/><rect x="398.2" y="78.4" width="11.1" height="10.2" fill="#8e93a3"/><rect x="409.0" y="78.4" width="11.1" height="10.2" fill="#5f6780"/><rect x="452.3" y="78.4" width="11.1" height="10.2" fill="#7e8497"/><rect x="322.4" y="88.3" width="11.1" height="10.8" fill="#f1f2f5"/><rect x="333.2" y="88.3" width="11.1" height="10.8" fill="#0f172b"/><rect x="344.0" y="88.3" width="11.1" height="10.8" fill="#f3f4f6"/><rect x="365.7" y="88.3" width="11.1" height="10.8" fill="#0f172b"/><rect x="430.7" y="88.3" width="11.1" height="10.8" fill="#8e93a3"/><rect x="441.5" y="88.3" width="11.1" height="10.8" fill="#0f172b"/><rect x="452.3" y="88.3" width="11.1" height="10.8" fill="#f7f8f9"/><rect x="302.3" y="88.3" width="9.2" height="10.8" fill="#0f172b"/><rect x="322.3" y="403.4" width="11.1" height="10.7" fill="#7b8194"/><rect x="333.2" y="403.4" width="11.1" height="10.7" fill="#8c92a2"/><rect x="354.8" y="403.4" width="11.1" height="10.7" fill="#7b8194"/><rect x="365.6" y="403.4" width="11.1" height="10.7" fill="#a9aebb"/><rect x="387.3" y="403.4" width="11.1" height="10.7" fill="#d5d8de"/><rect x="398.1" y="403.4" width="11.1" height="10.7" fill="#7b8194"/><rect x="409.0" y="403.4" width="11.1" height="10.7" fill="#eef0f3"/><rect x="419.8" y="403.4" width="11.1" height="10.7" fill="#a9aebb"/><rect x="430.6" y="403.4" width="11.1" height="10.7" fill="#8c92a2"/><rect x="441.5" y="403.4" width="11.1" height="10.7" fill="#5f6780"/><rect x="473.9" y="403.4" width="11.1" height="10.7" fill="#9aa0ad"/><rect x="311.5" y="413.8" width="11.1" height="10.7" fill="#6b7286"/><rect x="322.3" y="413.8" width="11.1" height="10.7" fill="#e8eaee"/><rect x="333.2" y="413.8" width="11.1" height="10.7" fill="#c9cdd5"/><rect x="344.0" y="413.8" width="11.1" height="10.7" fill="#e6e8ec"/><rect x="387.3" y="413.8" width="11.1" height="10.7" fill="#eef0f3"/><rect x="398.1" y="413.8" width="11.1" height="10.7" fill="#7b8194"/><rect x="409.0" y="413.8" width="11.1" height="10.7" fill="#d5d8de"/><rect x="419.8" y="413.8" width="11.1" height="10.7" fill="#0f172b"/><rect x="430.6" y="413.8" width="11.1" height="10.7" fill="#2a3347"/><rect x="441.5" y="413.8" width="11.1" height="10.7" fill="#3d4862"/><rect x="463.1" y="413.8" width="11.1" height="10.7" fill="#3a445c"/><rect x="473.9" y="413.8" width="11.1" height="10.7" fill="#3d4862"/><rect x="308.3" y="413.8" width="3.4" height="10.7" fill="#0f172b"/><rect x="735.1" y="77.6" width="11.1" height="11.0" fill="#d5d8de"/><rect x="810.9" y="77.6" width="11.1" height="11.0" fill="#f5f6f7"/><rect x="735.1" y="88.3" width="11.1" height="10.8" fill="#c0c4cc"/><rect x="745.9" y="88.3" width="11.1" height="10.8" fill="#6b7286"/><rect x="756.8" y="88.3" width="11.1" height="10.8" fill="#9096a5"/><rect x="767.6" y="88.3" width="11.1" height="10.8" fill="#6b7286"/><rect x="745.9" y="98.8" width="11.1" height="11.0" fill="#f1f2f5"/><rect x="735.1" y="164.1" width="11.1" height="11.0" fill="#9ea3af"/><rect x="745.9" y="164.1" width="11.1" height="11.0" fill="#f7f8f9"/><rect x="756.8" y="164.1" width="11.1" height="11.0" fill="#8c92a2"/><rect x="767.6" y="164.1" width="11.1" height="11.0" fill="#6b7286"/><rect x="778.4" y="164.1" width="11.1" height="11.0" fill="#a9aebb"/><rect x="789.2" y="164.1" width="11.1" height="11.0" fill="#6b7286"/><rect x="810.9" y="164.1" width="11.1" height="11.0" fill="#9297a6"/><rect x="756.8" y="174.8" width="11.1" height="11.0" fill="#8c92a2"/><rect x="767.6" y="174.8" width="11.1" height="11.0" fill="#8c92a2"/><rect x="735.1" y="240.2" width="11.1" height="11.0" fill="#d5d8de"/><rect x="810.9" y="240.2" width="11.1" height="11.0" fill="#f5f6f7"/><rect x="735.1" y="250.9" width="11.1" height="10.8" fill="#c0c4cc"/><rect x="745.9" y="250.9" width="11.1" height="10.8" fill="#6b7286"/><rect x="756.8" y="250.9" width="11.1" height="10.8" fill="#9096a5"/><rect x="767.6" y="250.9" width="11.1" height="10.8" fill="#6b7286"/><rect x="745.9" y="261.4" width="11.1" height="11.0" fill="#f1f2f5"/><rect x="735.1" y="326.7" width="11.1" height="11.0" fill="#9ea3af"/><rect x="745.9" y="326.7" width="11.1" height="11.0" fill="#f7f8f9"/><rect x="756.8" y="326.7" width="11.1" height="11.0" fill="#8c92a2"/><rect x="767.6" y="326.7" width="11.1" height="11.0" fill="#6b7286"/><rect x="778.4" y="326.7" width="11.1" height="11.0" fill="#a9aebb"/><rect x="789.2" y="326.7" width="11.1" height="11.0" fill="#6b7286"/><rect x="810.9" y="326.7" width="11.1" height="11.0" fill="#9297a6"/><rect x="756.8" y="337.4" width="11.1" height="11.0" fill="#8c92a2"/><rect x="767.6" y="337.4" width="11.1" height="11.0" fill="#8c92a2"/><rect x="735.1" y="402.8" width="11.1" height="11.0" fill="#d5d8de"/><rect x="810.9" y="402.8" width="11.1" height="11.0" fill="#f5f6f7"/><rect x="735.1" y="413.5" width="11.1" height="10.8" fill="#c0c4cc"/><rect x="745.9" y="413.5" width="11.1" height="10.8" fill="#6b7286"/><rect x="756.8" y="413.5" width="11.1" height="10.8" fill="#9096a5"/><rect x="767.6" y="413.5" width="11.1" height="10.8" fill="#6b7286"/><rect x="745.9" y="424.0" width="11.1" height="11.0" fill="#f1f2f5"/><rect x="735.1" y="489.3" width="11.1" height="11.0" fill="#9ea3af"/><rect x="745.9" y="489.3" width="11.1" height="11.0" fill="#f7f8f9"/><rect x="756.8" y="489.3" width="11.1" height="11.0" fill="#8c92a2"/><rect x="767.6" y="489.3" width="11.1" height="11.0" fill="#6b7286"/><rect x="778.4" y="489.3" width="11.1" height="11.0" fill="#a9aebb"/><rect x="789.2" y="489.3" width="11.1" height="11.0" fill="#6b7286"/><rect x="810.9" y="489.3" width="11.1" height="11.0" fill="#9297a6"/><rect x="756.8" y="500.0" width="11.1" height="11.0" fill="#8c92a2"/><rect x="767.6" y="500.0" width="11.1" height="11.0" fill="#8c92a2"/><rect x="735.1" y="565.4" width="11.1" height="11.0" fill="#d5d8de"/><rect x="810.9" y="565.4" width="11.1" height="11.0" fill="#f5f6f7"/><rect x="735.1" y="576.1" width="11.1" height="10.8" fill="#c0c4cc"/><rect x="745.9" y="576.1" width="11.1" height="10.8" fill="#6b7286"/><rect x="756.8" y="576.1" width="11.1" height="10.8" fill="#9096a5"/><rect x="767.6" y="576.1" width="11.1" height="10.8" fill="#6b7286"/><rect x="745.9" y="586.6" width="11.1" height="11.0" fill="#f1f2f5"/><rect x="756.8" y="653.1" width="11.1" height="10.8" fill="#b9bdc8"/><rect x="767.6" y="653.1" width="11.1" height="10.8" fill="#6b7286"/><rect x="778.4" y="653.1" width="11.1" height="10.8" fill="#8c92a2"/><rect x="789.2" y="653.1" width="11.1" height="10.8" fill="#6b7286"/><rect x="810.9" y="653.1" width="11.1" height="10.8" fill="#a9aebb"/><rect x="821.7" y="653.1" width="11.1" height="10.8" fill="#f1f2f5"/><rect x="832.6" y="653.1" width="11.1" height="10.8" fill="#9aa0ad"/><rect x="843.4" y="653.1" width="11.1" height="10.8" fill="#6b7286"/><rect x="854.2" y="653.1" width="11.1" height="10.8" fill="#8c92a2"/><rect x="865.1" y="653.1" width="11.1" height="10.8" fill="#6b7286"/><rect x="735.1" y="663.6" width="11.1" height="11.2" fill="#8c92a2"/><rect x="756.8" y="663.6" width="11.1" height="11.2" fill="#7b8194"/><rect x="778.4" y="663.6" width="11.1" height="11.2" fill="#8c92a2"/><rect x="789.2" y="663.6" width="11.1" height="11.2" fill="#a9aebb"/><rect x="821.7" y="663.6" width="11.1" height="11.2" fill="#f1f2f5"/><rect x="832.6" y="663.6" width="11.1" height="11.2" fill="#9aa0ad"/><rect x="843.4" y="663.6" width="11.1" height="11.2" fill="#8c92a2"/><rect x="854.2" y="663.6" width="11.1" height="11.2" fill="#f7f8f9"/><rect x="865.1" y="663.6" width="11.1" height="11.2" fill="#f7f8f9"/></svg>
  </div>
  <div class="abs" style="left:762.2px;top:783.9px;width:172.7px;height:6px;background:#213d70"></div>
  <div class="abs" style="left:36.8px;top:789.5px;width:914.2px;height:14px;border-radius:7px;background:#213d70"></div>
  <div class="abs" style="left:1025.2px;top:109.3px;width:14.6px;height:40.5px;border-radius:7.3px;background:#213d70"></div>
</div>

<script>(function(){var w=window.innerWidth;if(w&&Math.abs(w-3840)>2){document.documentElement.style.zoom=w/3840;}})();</script>
</body>
</html>
